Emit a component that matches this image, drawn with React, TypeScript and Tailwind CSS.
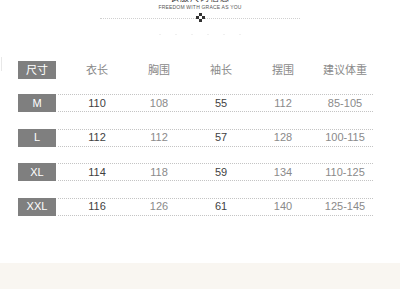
const cols = ["衣长", "胸围", "袖长", "摆围", "建议体重"];

const rows = [
  { size: "M", vals: ["110", "108", "55", "112", "85-105"] },
  { size: "L", vals: ["112", "112", "57", "128", "100-115"] },
  { size: "XL", vals: ["114", "118", "59", "134", "110-125"] },
  { size: "XXL", vals: ["116", "126", "61", "140", "125-145"] },
];

const font = { fontFamily: '"Liberation Sans", "Noto Sans CJK SC", sans-serif' };

function Badge({ children }: { children: React.ReactNode }) {
  return (
    <div className="flex h-[18px] w-[38px] shrink-0 items-center justify-center bg-[#7f7f7f] text-[11px] leading-none text-white">
      {children}
    </div>
  );
}

export default function App() {
  return (
    <div className="relative flex h-[289px] w-[400px] flex-col overflow-hidden bg-white" style={font}>
      {/* title, cut off at the top */}
      <div className="flex flex-col items-center">
        <div className="mt-[-7px] text-[9px] leading-[10px] tracking-[1px] text-[#333]">衣服尺码信息</div>
        <div className="mt-[1px] text-[5px] leading-[6px] tracking-[0.2px] text-[#555]">FREEDOM WITH GRACE AS YOU</div>
        <div className="relative mt-[3px] flex w-[200px] items-center justify-center">
          <div className="absolute inset-x-0 top-1/2 border-t border-dotted border-[#d0d0d0]" />
          <svg width="9" height="9" viewBox="0 0 9 9" className="relative bg-white">
            <rect x="3" y="0" width="3" height="3" fill="#333" />
            <rect x="0" y="3" width="3" height="3" fill="#333" />
            <rect x="6" y="3" width="3" height="3" fill="#333" />
            <rect x="3" y="6" width="3" height="3" fill="#333" />
          </svg>
        </div>
        <div className="mt-[12px] flex gap-[14px]">
          {[0, 1, 2, 3, 4, 5].map((i) => (
            <span key={i} className="h-[1px] w-[2px] bg-[#f0f0f0]" />
          ))}
        </div>
      </div>

      <div className="absolute left-[1px] top-[57px] h-[14px] border-l border-[#e8e8e8]" />

      {/* header row */}
      <div className="mt-[26px] flex items-center pl-[18px]">
        <Badge>尺寸</Badge>
        <div className="grid w-[315px] grid-cols-[repeat(5,62px)] pl-[10px] text-[11px] text-[#8a8a8a]">
          {cols.map((c) => (
            <div key={c} className="text-center">{c}</div>
          ))}
        </div>
      </div>

      {/* size rows */}
      <div className="mt-[15px] flex flex-col gap-[16.5px]">
        {rows.map((r) => (
          <div key={r.size} className="flex items-stretch pl-[18px]">
            <Badge>{r.size}</Badge>
            <div className="ml-[2px] grid h-[18px] w-[315px] grid-cols-[repeat(5,62px)] items-center border-y border-dotted border-[#c4c4c4] pl-[8px] text-[11px] leading-none">
              {r.vals.map((v, i) => (
                <div
                  key={i}
                  className={`text-center ${i === 0 || i === 2 ? "text-[#3f3f3f]" : "text-[#8a8a8a]"}`}
                >
                  {v}
                </div>
              ))}
            </div>
          </div>
        ))}
      </div>

      <div className="mt-auto h-[26px] w-full bg-[#f9f6f1]" />
    </div>
  );
}
